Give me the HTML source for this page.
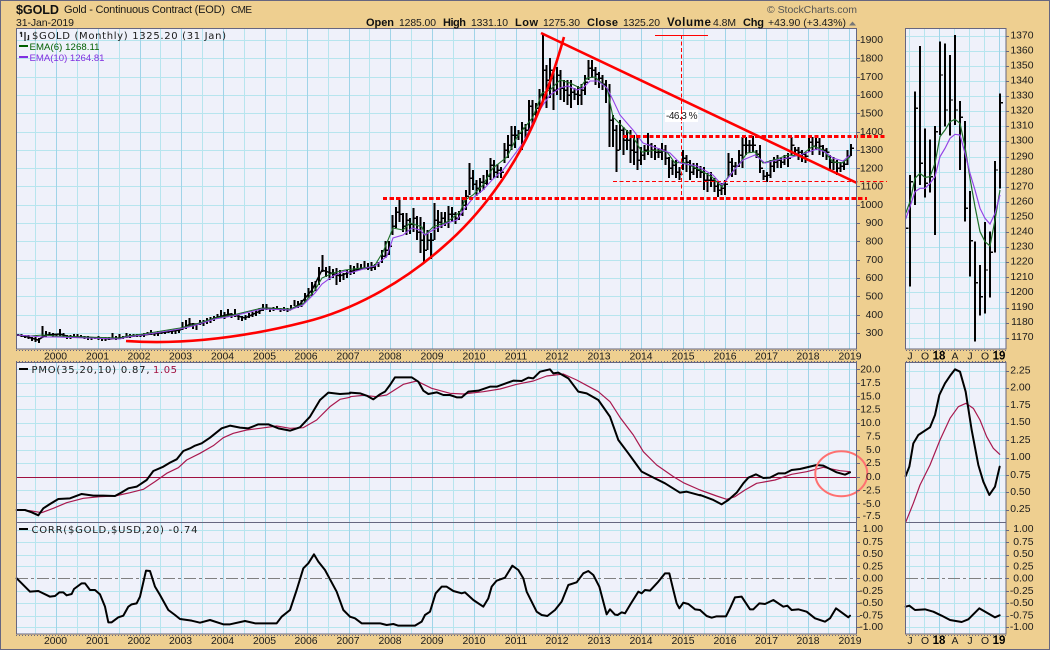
<!DOCTYPE html>
<html>
<head>
<meta charset="utf-8">
<title>$GOLD</title>
<style>
html,body{margin:0;padding:0;background:#EECF90;width:1050px;height:650px;overflow:hidden}
svg{display:block}
text{font-family:"Liberation Sans",Arial,sans-serif;font-size:10.4px;fill:#1a1a1a}
.l{font-family:"DejaVu Sans",sans-serif;font-size:10px}
.b{font-weight:bold;font-size:11px;fill:#111}
.r text{text-anchor:end}
.m text{text-anchor:middle}
</style>
</head>
<body>
<svg width="1050" height="650" viewBox="0 0 1050 650" xmlns="http://www.w3.org/2000/svg">
<rect x="0.5" y="0.5" width="1049" height="649" fill="#EECF90" stroke="#666680" stroke-width="1"/>

<!-- panels -->
<g fill="#EFF1FA">
<rect x="16" y="28" width="841" height="321"/>
<rect x="16" y="362" width="841" height="272"/>
<rect x="906" y="28" width="100" height="321"/>
<rect x="906" y="362" width="100" height="272"/>
</g>

<!-- grid minor -->
<g fill="none" stroke="#B7E5EE" stroke-width="1" shape-rendering="crispEdges">
<path d="M16 40.5H857M16 58.5H857M16 77.5H857M16 95.5H857M16 113.5H857M16 132.5H857M16 150.5H857M16 168.5H857M16 186.5H857M16 205.5H857M16 223.5H857M16 241.5H857M16 260.5H857M16 278.5H857M16 296.5H857M16 315.5H857M16 333.5H857"/>
<path d="M16 369.5H857M16 383.5H857M16 396.5H857M16 409.5H857M16 423.5H857M16 436.5H857M16 450.5H857M16 463.5H857M16 490.5H857M16 503.5H857M16 517.5H857"/>
<path d="M16 530.5H857M16 542.5H857M16 555.5H857M16 566.5H857M16 591.5H857M16 603.5H857M16 616.5H857M16 627.5H857"/>
<path d="M906 36.5H1006M906 51.5H1006M906 66.5H1006M906 81.5H1006M906 96.5H1006M906 111.5H1006M906 126.5H1006M906 141.5H1006M906 157.5H1006M906 172.5H1006M906 187.5H1006M906 202.5H1006M906 217.5H1006M906 232.5H1006M906 247.5H1006M906 262.5H1006M906 277.5H1006M906 292.5H1006M906 308.5H1006M906 323.5H1006M906 338.5H1006"/>
<path d="M906 371.5H1006M906 388.5H1006M906 406.5H1006M906 423.5H1006M906 440.5H1006M906 458.5H1006M906 475.5H1006M906 492.5H1006M906 510.5H1006"/>
<path d="M906 530.5H1006M906 542.5H1006M906 555.5H1006M906 566.5H1006M906 591.5H1006M906 603.5H1006M906 616.5H1006M906 627.5H1006"/>
<path d="M35.5 28V349M77.5 28V349M119.5 28V349M160.5 28V349M202.5 28V349M244.5 28V349M286.5 28V349M328.5 28V349M369.5 28V349M411.5 28V349M453.5 28V349M495.5 28V349M536.5 28V349M578.5 28V349M620.5 28V349M662.5 28V349M704.5 28V349M745.5 28V349M787.5 28V349M828.5 28V349"/>
<path d="M35.5 362V634M77.5 362V634M119.5 362V634M160.5 362V634M202.5 362V634M244.5 362V634M286.5 362V634M328.5 362V634M369.5 362V634M411.5 362V634M453.5 362V634M495.5 362V634M536.5 362V634M578.5 362V634M620.5 362V634M662.5 362V634M704.5 362V634M745.5 362V634M787.5 362V634M828.5 362V634"/>
<path d="M909.5 28V349M924.5 28V349M954.5 28V349M969.5 28V349M984.5 28V349M909.5 362V634M924.5 362V634M954.5 362V634M969.5 362V634M984.5 362V634"/>
</g>
<!-- grid major -->
<g fill="none" stroke="#A0D4E8" stroke-width="1" shape-rendering="crispEdges">
<path d="M56.5 28V349M98.5 28V349M140.5 28V349M181.5 28V349M223.5 28V349M265.5 28V349M307.5 28V349M349.5 28V349M390.5 28V349M432.5 28V349M474.5 28V349M516.5 28V349M557.5 28V349M599.5 28V349M641.5 28V349M683.5 28V349M725.5 28V349M766.5 28V349M808.5 28V349M849.5 28V349"/>
<path d="M56.5 362V634M98.5 362V634M140.5 362V634M181.5 362V634M223.5 362V634M265.5 362V634M307.5 362V634M349.5 362V634M390.5 362V634M432.5 362V634M474.5 362V634M516.5 362V634M557.5 362V634M599.5 362V634M641.5 362V634M683.5 362V634M725.5 362V634M766.5 362V634M808.5 362V634M849.5 362V634"/>
<path d="M939.5 28V349M999.5 28V349M939.5 362V634M999.5 362V634"/>
</g>

<!-- main price bars -->
<path shape-rendering="crispEdges" fill="none" stroke="#000" stroke-width="2" d="M18 334V336M21.5 334V337M25 335V338M28.5 335V339M32 337V341M35.5 337V342M39 338V343M42.5 326V338M46 331V337M49.5 332V336M53 333V337M56.5 334V336M60 329V336M63.5 333V337M67 335V339M70.5 335V339M74 334V337M77.5 334V337M81 335V337M84.5 336V339M88 336V340M91.5 337V340M95 337V339M98.5 336V340M102 337V341M105.5 337V341M109 337V340M112.5 333V338M116 336V340M119.5 334V338M123 336V339M126.5 333V338M130 334V338M133.5 334V337M137 334V337M140.5 335V337M144 333V337M147.5 332V335M151 330V335M154.5 333V336M158 331V336M161.5 331V334M165 331V334M168.5 330V333M172 331V334M175.5 331V334M179 330V333M182.5 322V330M186 320V329M189.5 318V327M193 323V329M196.5 324V330M200 320V325M203.5 320V326M207 318V324M210.5 317V323M214 316V321M217.5 314V319M221 310V318M224.5 312V319M228 309V317M231.5 313V318M235 309V317M238.5 315V320M242 316V321M245.5 315V320M249 313V318M252.5 312V317M256 310V316M259.5 308V314M263 304V311M266.5 304V310M270 308V312M273.5 307V311M277 306V310M280.5 308V312M284 307V311M287.5 308V312M291 305V310M294.5 300V306M298 301V308M301.5 300V307M305 293V303M308.5 288V298M312 282V296M315.5 281V291M319 267V285M322.5 255V272M326 267V277M329.5 266V280M333 269V278M336.5 268V285M340 270V282M343.5 273V280M347 270V278M350.5 265V275M354 266V274M357.5 263V271M361 264V270M364.5 261V269M368 263V270M371.5 262V271M375 264V270M378.5 262V267M382 250V263M385.5 241V258M389 241V255M392.5 215V235M396 207V228M399.5 200V222M403 213V232M406.5 213V235M410 218V234M413.5 208V232M417 216V240M420.5 217V253M424 222V263M427.5 230V250M431 233V259M434.5 203V240M438 210V232M441.5 212V228M445 212V226M448.5 206V228M452 207V222M455.5 212V224M459 211V220M462.5 197V216M466 190V210M469.5 163V195M473 170V190M476.5 180V196M480 178V193M483.5 175V190M487 170V185M490.5 158V180M494 160V178M497.5 164V178M501 167V178M504.5 143V163M508 135V158M511.5 126V150M515 126V148M518.5 130V140M522 122V150M525.5 124V140M529 100V130M532.5 100V125M536 103V118M539.5 89V108M543 35V100M546.5 65V108M550 58V98M553.5 72V110M557 67V95M560.5 70V100M564 80V102M567.5 80V105M571 80V108M574.5 88V100M578 86V105M581.5 84V105M585 75V95M588.5 60V80M592 60V78M595.5 67V85M599 72V88M602.5 75V90M606 80V103M609.5 84V147M613 115V147M616.5 125V172M620 120V150M623.5 127V155M627 130V150M630.5 130V163M634 135V165M637.5 135V170M641 147V165M644.5 145V160M648 133V155M651.5 143V158M655 145V160M658.5 148V158M662 143V160M665.5 145V165M669 157V178M672.5 160V175M676 160V178M679.5 167V180M683 150V170M686.5 155V172M690 160V180M693.5 163V175M697 163V178M700.5 166V178M704 167V190M707.5 173V192M711 172V187M714.5 178V192M718 182V197M721.5 183V195M725 180V195M728.5 153V177M732 158V177M735.5 162V175M739 150V167M742.5 137V168M746 137V155M749.5 140V153M753 136V152M756.5 150V158M760 145V173M763.5 170V180M767 172V182M770.5 160V178M774 157V172M777.5 155V168M781 158V168M784.5 155V165M788 153V167M791.5 137V155M795 147V155M798.5 147V160M802 150V162M805.5 152V163M809 137V152M812.5 137V155M816 138V150M819.5 138V155M823 145V157M826.5 148V160M830 155V170M833.5 157V170M837 160V175M840.5 162V172M844 160V170M847.5 150V165M851 144V156"/>
<!-- close ticks -->
<path shape-rendering="crispEdges" fill="none" stroke="#000" stroke-width="1.5" d="M382 256h3M385.5 250h3M389 246h3M392.5 226h3M396 212h3M399.5 214h3M403 226h3M406.5 220h3M410 224h3M413.5 218h3M417 232h3M420.5 240h3M424 250h3M427.5 240h3M431 240h3M434.5 220h3M438 222h3M441.5 218h3M445 222h3M448.5 214h3M452 214h3M455.5 218h3M459 214h3M462.5 205h3M466 196h3M469.5 178h3M473 184h3M476.5 188h3M480 182h3M483.5 183h3M487 176h3M490.5 165h3M494 172h3M497.5 170h3M501 172h3M504.5 150h3M508 145h3M511.5 135h3M515 135h3M518.5 133h3M522 128h3M525.5 130h3M529 106h3M532.5 114h3M536 108h3M539.5 95h3M543 70h3M546.5 80h3M550 70h3M553.5 90h3M557 75h3M560.5 88h3M564 90h3M567.5 95h3M571 92h3M574.5 94h3M578 95h3M581.5 90h3M585 82h3M588.5 68h3M592 70h3M595.5 74h3M599 78h3M602.5 84h3M606 90h3M609.5 120h3M613 130h3M616.5 150h3M620 130h3M623.5 140h3M627 140h3M630.5 150h3M634 152h3M637.5 160h3M641 155h3M644.5 150h3M648 145h3M651.5 150h3M655 152h3M658.5 152h3M662 150h3M665.5 158h3M669 168h3M672.5 165h3M676 172h3M679.5 174h3M683 158h3M686.5 162h3M690 172h3M693.5 168h3M697 170h3M700.5 172h3M704 180h3M707.5 180h3M711 180h3M714.5 186h3M718 190h3M721.5 188h3M725 184h3M728.5 162h3M732 166h3M735.5 166h3M739 155h3M742.5 145h3M746 145h3M749.5 145h3M753 145h3M756.5 154h3M760 168h3M763.5 176h3M767 175h3M770.5 166h3M774 162h3M777.5 160h3M781 162h3M784.5 158h3M788 158h3M791.5 145h3M795 150h3M798.5 152h3M802 154h3M805.5 156h3M809 142h3M812.5 146h3M816 142h3M819.5 146h3M823 150h3M826.5 152h3M830 162h3M833.5 162h3M837 168h3M840.5 166h3M844 164h3M847.5 156h3M851 148h3"/>
<polyline fill="none" stroke="#000" stroke-width="1.5" points="18,335 28,337 38,340 46,335 60,334 70,337 85,337 110,339 135,336 160,333 180,330 190,324 200,324 215,318 230,314 245,318 258,312 266,308 290,310 300,304 312,290 322,270 340,276 355,270 375,267"/>

<!-- main EMAs -->
<polyline fill="none" stroke="#1E6E28" stroke-width="1.1" points="17,335 30,336 43,335 56,336 85,337 120,338 127,336 143,334 180,328 193,325 215,318 233,315 262,308 290,309 303,304 315,290 322,278 333,273 345,270 370,267 375,265 383,252 393,228 403,230 410,223 422,227 425,235 433,227 447,222 460,212 465,200 473,195 483,185 493,168 507,157 517,137 533,117 542,93 550,90 560,80 570,83 580,88 587,78 595,77 607,88 613,117 623,127 633,137 642,152 657,150 667,152 675,163 683,162 700,170 712,177 722,187 728,177 740,163 747,153 755,152 763,163 777,159 788,155 800,156 813,146 823,150 833,162 842,163 850,157"/>
<polyline fill="none" stroke="#9444E6" stroke-width="1.1" points="17,335 30,336 43,337 56,337 85,338 120,339 127,337 143,335 180,329 193,326 215,319 233,316 262,309 290,310 303,305 315,293 322,284 333,276 345,271 350,273 370,267 375,266 387,256 393,238 403,235 412,228 420,230 425,235 433,230 447,223 457,220 465,208 473,198 483,190 492,180 503,170 523,143 535,118 543,105 550,95 560,88 568,86 577,90 583,88 590,81 598,81 607,88 613,100 620,115 633,130 643,143 657,148 670,153 680,163 697,166 713,175 722,185 728,178 735,169 743,160 755,155 765,163 777,160 788,158 800,155 817,149 825,152 833,158 843,161 850,155"/>

<!-- red annotations -->
<g fill="none" stroke="#F00">
<path stroke-width="2.6" d="M126 341C170 344 230 341 305 322C350 311 400 285 443 247C478 217 515 170 538 113C548 90 558 58 564 37"/>
<line x1="541" y1="33" x2="857" y2="183" stroke-width="2.6"/>
<path d="M623 136.5H885M383 198.5H867" stroke-width="3" stroke-dasharray="4.2 2.4" shape-rendering="crispEdges"/>
<path d="M613 181.5H887M681.5 35V198" stroke-width="1" stroke-dasharray="4 2.5" shape-rendering="crispEdges"/>
<path d="M655 35.5H708" stroke-width="1" shape-rendering="crispEdges"/>
</g>
<rect x="665" y="110" width="33" height="12" fill="#fff"/>
<path d="M681.5 110V122" stroke="#F00" stroke-width="1" stroke-dasharray="4 2.5"/>
<text x="666" y="119" textLength="31.5" style="font-size:10px">-46.3 %</text>

<!-- right price bars -->
<g transform="translate(900,20) scale(.33333)" fill="none">
<path shape-rendering="crispEdges" stroke="#000" stroke-width="6" d="M30 465V800M45 215V555M60 78V495M75 325V533M90 358V518M105 318V645M120 65V345M135 70V320M150 105V347M165 45V315M180 243V450M195 303V605M210 513V770M225 665V965M240 735V887M255 606V880M270 635V833M285 423V697M300 220V505"/>
<path shape-rendering="crispEdges" stroke="#000" stroke-width="4" d="M17 625H26M30 485H39M45 265H54M60 430H69M75 490H84M90 470H99M105 335H114M120 165H129M135 270H144M150 240H159M165 270H174M180 292H189M195 565H204M210 662H219M225 788H234M240 830H249M255 750H264M270 697H279M285 450H294M300 248H309"/>
<polyline stroke="#1E6E28" stroke-width="3.6" points="17,580 30,545 45,475 60,460 75,472 90,470 105,430 120,350 135,330 150,305 165,298 180,310 195,380 210,475 225,560 240,635 255,665 270,678 285,600 300,510"/>
<polyline stroke="#9444E6" stroke-width="3.6" points="17,597 30,560 45,515 60,505 75,505 90,490 105,470 120,410 135,385 150,355 165,343 180,345 195,400 210,460 225,510 240,565 255,595 270,612 285,580 300,525"/>
</g>

<!-- PMO -->
<path d="M16 477.5H857" stroke="#A01040" stroke-width="1" shape-rendering="crispEdges"/>
<g fill="none" stroke-linejoin="round" stroke-linecap="round">
<g transform="translate(0,300) scale(.33333)">
<polyline stroke="#A8184E" stroke-width="3.6" points="50,630 90,632 125,638 160,625 200,608 250,595 300,590 345,588 390,578 430,568 465,545 500,520 535,503 560,480 600,460 640,437 670,413 700,400 740,390 780,385 830,378 870,385 910,383 950,360 990,320 1020,298 1050,292"/>
<polyline stroke="#000" stroke-width="6" points="50,630 75,630 95,637 115,646 130,625 150,612 175,597 210,595 245,582 280,587 310,587 345,588 365,577 385,565 410,560 440,540 460,513 490,500 510,488 530,478 550,453 570,445 585,437 605,430 630,413 665,385 690,377 720,383 745,385 775,373 805,373 835,385 870,392 900,382 930,350 960,300 985,278 1020,282 1050,280"/>
</g>
<g transform="translate(350,340) scale(.33333)">
<polyline stroke="#A8184E" stroke-width="3.6" points="0,170 40,166 80,170 110,165 160,133 200,123 245,145 300,160 340,162 400,155 450,147 500,133 550,123 590,108 640,102 680,120 745,155 780,185 810,232 850,285 880,335 920,375 970,410 1000,428 1050,450"/>
<polyline stroke="#000" stroke-width="6" points="0,158 30,160 50,167 70,178 90,163 105,155 120,135 135,112 185,112 205,125 220,152 235,162 260,157 280,165 300,165 320,172 335,172 355,155 385,152 420,140 440,140 490,122 515,123 535,113 550,115 570,95 600,88 610,100 625,98 655,115 685,155 710,160 745,180 780,230 805,300 835,340 875,395 915,415 945,430 990,458 1010,455 1050,466"/>
</g>
<g transform="translate(700,340) scale(.33333)">
<polyline stroke="#A8184E" stroke-width="3.6" points="0,450 50,468 80,478 105,470 135,450 170,430 225,420 275,403 320,395 370,382 420,392 450,395"/>
<polyline stroke="#000" stroke-width="6" points="0,465 40,480 65,493 85,480 110,458 130,430 145,413 168,403 190,414 210,413 235,400 255,400 275,390 300,387 350,375 370,377 410,397 435,404 450,397"/>
<polyline stroke="#A8184E" stroke-width="3.6" points="617,547 640,490 660,435 690,375 720,300 750,235 775,200 798,190 820,205 840,240 860,290 880,325 899,343"/>
<polyline stroke="#000" stroke-width="6" points="617,408 628,380 640,310 655,285 690,262 705,225 718,165 735,130 752,105 765,88 780,95 797,155 815,270 835,375 850,425 868,465 885,440 899,380"/>
</g>
</g>
<ellipse cx="841.3" cy="473.7" rx="26" ry="22.5" fill="none" stroke="#FF7070" stroke-width="2"/>

<!-- CORR -->
<path d="M16 578.5H857M906 578.5H1006" stroke="#808080" stroke-width="1" stroke-dasharray="12 3 3 3" shape-rendering="crispEdges"/>
<g fill="none" stroke="#000" stroke-width="6" stroke-linejoin="round" stroke-linecap="round">
<g transform="translate(0,510) scale(.33333)"><polyline points="50,205 65,220 90,245 115,243 150,260 165,258 178,247 190,247 200,256 215,252 222,237 245,220 255,220 270,240 285,240 300,253 315,290 325,337 335,337 355,322 370,317 385,290 395,283 410,280 420,260 438,182 450,183 465,230 480,255 505,300 525,315 540,327 575,332 600,338 630,330 670,343 690,343 735,333 765,340 830,340 845,320 870,300 890,240 910,175 925,160 942,133 955,155 975,180 1010,245 1030,300 1050,320"/></g>
<g transform="translate(350,510) scale(.33333)"><polyline points="0,320 15,325 35,340 55,340 90,340 110,345 130,342 145,347 195,347 215,335 225,315 240,305 257,250 275,230 290,230 310,243 335,250 345,247 370,270 400,290 415,265 425,230 440,212 465,203 487,167 505,180 520,205 530,245 560,305 575,315 592,318 615,300 635,275 655,225 680,217 700,190 715,183 730,195 748,230 770,313 780,298 795,314 803,315 815,307 825,310 840,285 865,245 875,250 885,240 900,242 925,215 945,190 958,190 970,240 980,280 988,295 1000,278 1015,282 1035,298 1050,300"/></g>
<g transform="translate(700,510) scale(.33333)"><polyline points="0,300 20,318 35,323 50,319 78,319 90,295 105,262 125,260 150,298 160,298 178,280 195,282 220,270 250,290 262,287 275,300 295,298 320,305 345,325 375,335 390,325 408,295 445,322 450,317"/>
<polyline points="617,290 628,287 645,300 675,298 700,305 725,317 750,330 785,336 805,328 838,295 885,322 899,316"/></g>
</g>

<!-- panel borders -->
<g fill="none" stroke="#666680" stroke-width="1" shape-rendering="crispEdges">
<rect x="16.5" y="28.5" width="840" height="320.5"/>
<rect x="16.5" y="362.5" width="840" height="271.5"/>
<rect x="905.5" y="28.5" width="100.5" height="320.5"/>
<rect x="905.5" y="362.5" width="100.5" height="271.5"/>
<path d="M16 522.5H857M906 522.5H1006"/>
<path stroke-dasharray="1 2" d="M16 350.5H857M16 361.5H857M906 350.5H1006M906 361.5H1006M16 635.5H857M906 635.5H1006"/>
<path d="M857 40.5h3M857 58.5h3M857 77.5h3M857 95.5h3M857 113.5h3M857 132.5h3M857 150.5h3M857 168.5h3M857 186.5h3M857 205.5h3M857 223.5h3M857 241.5h3M857 260.5h3M857 278.5h3M857 296.5h3M857 315.5h3M857 333.5h3M857 369.5h3M857 383.5h3M857 396.5h3M857 409.5h3M857 423.5h3M857 436.5h3M857 450.5h3M857 463.5h3M857 477.5h3M857 490.5h3M857 503.5h3M857 517.5h3M857 530.5h3M857 542.5h3M857 555.5h3M857 566.5h3M857 578.5h3M857 591.5h3M857 603.5h3M857 616.5h3M857 627.5h3"/>
<path d="M1006 36.5h3M1006 51.5h3M1006 66.5h3M1006 81.5h3M1006 96.5h3M1006 111.5h3M1006 126.5h3M1006 141.5h3M1006 157.5h3M1006 172.5h3M1006 187.5h3M1006 202.5h3M1006 217.5h3M1006 232.5h3M1006 247.5h3M1006 262.5h3M1006 277.5h3M1006 292.5h3M1006 308.5h3M1006 323.5h3M1006 338.5h3M1006 371.5h3M1006 388.5h3M1006 406.5h3M1006 423.5h3M1006 440.5h3M1006 458.5h3M1006 475.5h3M1006 492.5h3M1006 510.5h3M1006 530.5h3M1006 542.5h3M1006 555.5h3M1006 566.5h3M1006 578.5h3M1006 591.5h3M1006 603.5h3M1006 616.5h3M1006 627.5h3"/>
</g>

<!-- header -->
<text x="16" y="14" textLength="43" style="font-size:12.6px;font-weight:bold;fill:#111">$GOLD</text>
<text x="64" y="13" textLength="161" style="font-size:11px">Gold - Continuous Contract (EOD)</text>
<text x="231" y="13" textLength="21" style="font-size:10px">CME</text>
<text x="16" y="26" textLength="58" style="font-size:10.5px">31-Jan-2019</text>
<text class="b" x="366" y="26" textLength="28">Open</text>
<text x="399" y="26" textLength="37">1285.00</text>
<text class="b" x="443" y="26" textLength="23">High</text>
<text x="471" y="26" textLength="37">1331.10</text>
<text class="b" x="515" y="26" textLength="23">Low</text>
<text x="543" y="26" textLength="37">1275.30</text>
<text class="b" x="587" y="26" textLength="31">Close</text>
<text x="623" y="26" textLength="37">1325.20</text>
<text class="b" x="667" y="26" textLength="44" style="font-size:11.6px">Volume</text>
<text x="713" y="26" textLength="23">4.8M</text>
<text class="b" x="743" y="26" textLength="21">Chg</text>
<text x="768" y="26" textLength="78">+43.90 (+3.43%)</text>
<path d="M849 25.5h7l-3.5-4z" fill="#777"/>
<text x="767" y="13" textLength="90" style="font-size:10.5px;fill:#555">© StockCharts.com</text>

<!-- legends -->
<path d="M21.5 32v5M20 33.5l1.5-1.5M25 32v9M28.5 35v5M27.5 39l1 1" stroke="#222" stroke-width="1.3" fill="none"/>
<text class="l" x="32" y="39" textLength="194">$GOLD (Monthly) 1325.20 (31 Jan)</text>
<path d="M19 46h9" stroke="#006000" stroke-width="2"/>
<text x="29.5" y="50" textLength="70" style="font-size:9.6px;fill:#006000">EMA(6) 1268.11</text>
<path d="M19 57h9" stroke="#8030E0" stroke-width="2"/>
<text x="29.5" y="61" textLength="75" style="font-size:9.6px;fill:#8030E0">EMA(10) 1264.81</text>
<path d="M19 369h9M19 529h9" stroke="#000" stroke-width="2"/>
<text class="l" x="31.5" y="373" textLength="118">PMO(35,20,10) 0.87,</text>
<text class="l" x="153" y="373" textLength="24" style="fill:#A01040">1.05</text>
<text class="l" x="31.5" y="533" textLength="166">CORR($GOLD,$USD,20) -0.74</text>

<!-- axis labels price -->
<g class="r">
<text x="883" y="43">1900</text><text x="883" y="61.5">1800</text><text x="883" y="80">1700</text><text x="883" y="98">1600</text><text x="883" y="116.5">1500</text><text x="883" y="135">1400</text><text x="883" y="153">1300</text><text x="883" y="171.5">1200</text><text x="883" y="189.5">1100</text><text x="883" y="208">1000</text><text x="883" y="226">900</text><text x="883" y="244.5">800</text><text x="883" y="263">700</text><text x="883" y="281">600</text><text x="883" y="299.5">500</text><text x="883" y="318">400</text><text x="883" y="336">300</text>

<text x="880.5" y="372.5">20.0</text><text x="880.5" y="386">17.5</text><text x="880.5" y="399.5">15.0</text><text x="880.5" y="412.5">12.5</text><text x="880.5" y="426">10.0</text><text x="880.5" y="439.5">7.5</text><text x="880.5" y="453">5.0</text><text x="880.5" y="466">2.5</text><text x="880.5" y="480">0.0</text><text x="880.5" y="493.5">-2.5</text><text x="880.5" y="507">-5.0</text><text x="880.5" y="519">-7.5</text>

<text x="883" y="532">1.00</text><text x="883" y="545">0.75</text><text x="883" y="557">0.50</text><text x="883" y="569.5">0.25</text><text x="883" y="581.5">0.00</text><text x="883" y="594">-0.25</text><text x="883" y="606">-0.50</text><text x="883" y="618.5">-0.75</text><text x="883" y="630">-1.00</text>

<text x="1033.5" y="38.5">1370</text><text x="1033.5" y="53.5">1360</text><text x="1033.5" y="68.5">1350</text><text x="1033.5" y="83.5">1340</text><text x="1033.5" y="98.5">1330</text><text x="1033.5" y="113.5">1320</text><text x="1033.5" y="128.5">1310</text><text x="1033.5" y="143.5">1300</text><text x="1033.5" y="159.5">1290</text><text x="1033.5" y="174.5">1280</text><text x="1033.5" y="189.5">1270</text><text x="1033.5" y="204.5">1260</text><text x="1033.5" y="219.5">1250</text><text x="1033.5" y="234.5">1240</text><text x="1033.5" y="249.5">1230</text><text x="1033.5" y="264.5">1220</text><text x="1033.5" y="280">1210</text><text x="1033.5" y="295">1200</text><text x="1033.5" y="310">1190</text><text x="1033.5" y="325">1180</text><text x="1033.5" y="340">1170</text>

<text x="1030.5" y="373.5">2.25</text><text x="1030.5" y="390.5">2.00</text><text x="1030.5" y="408">1.75</text><text x="1030.5" y="425">1.50</text><text x="1030.5" y="443">1.25</text><text x="1030.5" y="460">1.00</text><text x="1030.5" y="478">0.75</text><text x="1030.5" y="495">0.50</text><text x="1030.5" y="512">0.25</text>

<text x="1033.5" y="532">1.00</text><text x="1033.5" y="545">0.75</text><text x="1033.5" y="557">0.50</text><text x="1033.5" y="569.5">0.25</text><text x="1033.5" y="581.5">0.00</text><text x="1033.5" y="594">-0.25</text><text x="1033.5" y="606">-0.50</text><text x="1033.5" y="618.5">-0.75</text><text x="1033.5" y="630">-1.00</text>
</g>

<!-- date labels -->
<g class="m">
<text x="55.5" y="359.5">2000</text><text x="97.5" y="359.5">2001</text><text x="139" y="359.5">2002</text><text x="180.5" y="359.5">2003</text><text x="222.5" y="359.5">2004</text><text x="264.5" y="359.5">2005</text><text x="306" y="359.5">2006</text><text x="348" y="359.5">2007</text><text x="390" y="359.5">2008</text><text x="432" y="359.5">2009</text><text x="474" y="359.5">2010</text><text x="516" y="359.5">2011</text><text x="557" y="359.5">2012</text><text x="599" y="359.5">2013</text><text x="641" y="359.5">2014</text><text x="683" y="359.5">2015</text><text x="725" y="359.5">2016</text><text x="766.5" y="359.5">2017</text><text x="808" y="359.5">2018</text><text x="850" y="359.5">2019</text>
<text x="55.5" y="644">2000</text><text x="97.5" y="644">2001</text><text x="139" y="644">2002</text><text x="180.5" y="644">2003</text><text x="222.5" y="644">2004</text><text x="264.5" y="644">2005</text><text x="306" y="644">2006</text><text x="348" y="644">2007</text><text x="390" y="644">2008</text><text x="432" y="644">2009</text><text x="474" y="644">2010</text><text x="516" y="644">2011</text><text x="557" y="644">2012</text><text x="599" y="644">2013</text><text x="641" y="644">2014</text><text x="683" y="644">2015</text><text x="725" y="644">2016</text><text x="766.5" y="644">2017</text><text x="808" y="644">2018</text><text x="850" y="644">2019</text>

<text x="910" y="359.5">J</text><text x="925" y="359.5">O</text><text x="939" y="359.5" style="font-weight:bold;font-size:11.5px;fill:#000">18</text><text x="955" y="359.5">A</text><text x="970" y="359.5">J</text><text x="985" y="359.5">O</text><text x="999" y="359.5" style="font-weight:bold;font-size:11.5px;fill:#000">19</text>
<text x="910" y="644">J</text><text x="925" y="644">O</text><text x="939" y="644" style="font-weight:bold;font-size:11.5px;fill:#000">18</text><text x="955" y="644">A</text><text x="970" y="644">J</text><text x="985" y="644">O</text><text x="999" y="644" style="font-weight:bold;font-size:11.5px;fill:#000">19</text>
</g>
</svg>
</body>
</html>
